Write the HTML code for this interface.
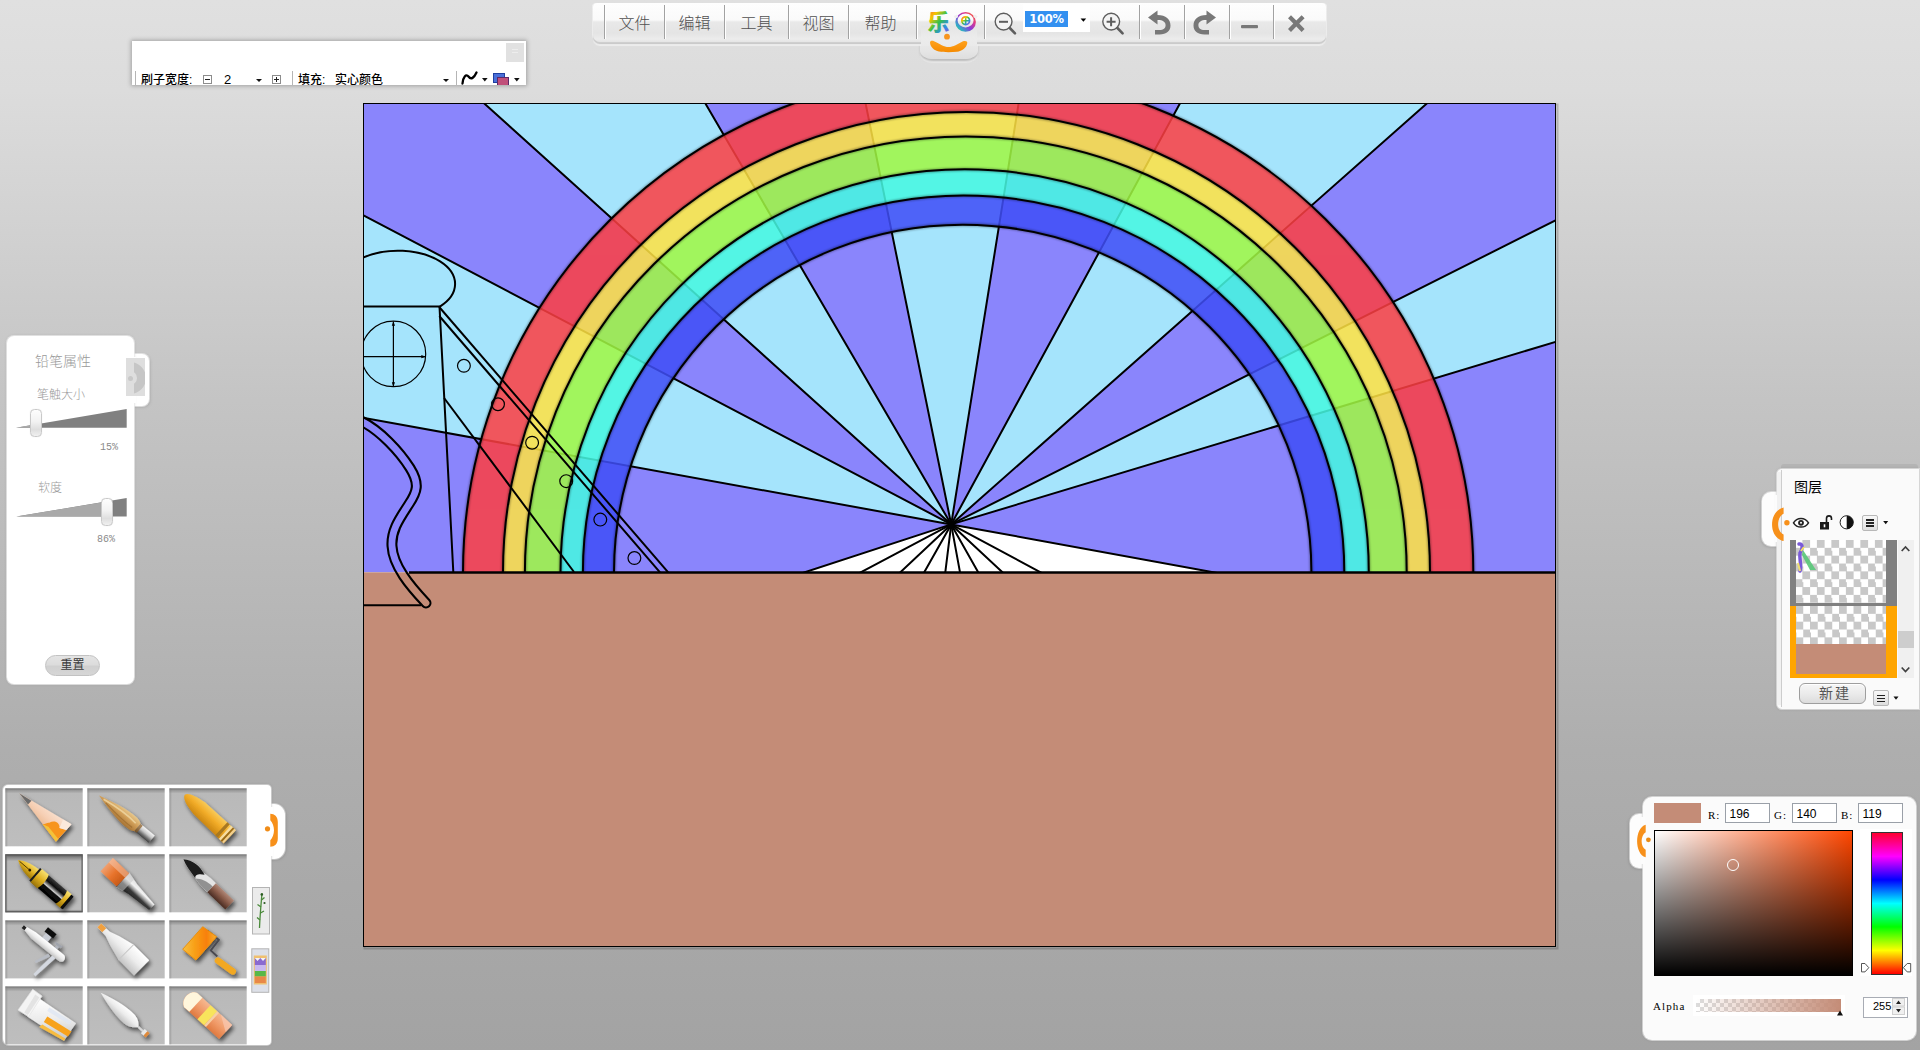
<!DOCTYPE html>
<html lang="zh-CN">
<head>
<meta charset="utf-8">
<title>Paint</title>
<style>
html,body{margin:0;padding:0;}
body{width:1920px;height:1050px;overflow:hidden;position:relative;
 background:linear-gradient(to bottom,#e0e0e0 0px,#dcdcdc 90px,#c4c4c4 400px,#aeaeae 750px,#a3a3a3 1050px);
 font-family:"Liberation Sans","Noto Sans CJK SC",sans-serif;font-size:12px;color:#000;}
.abs{position:absolute;}
.cjk{font-family:"Liberation Sans","Noto Sans CJK SC",sans-serif;}
</style>
</head>
<body>
<svg id="cv" width="1920" height="1050" viewBox="0 0 1920 1050" style="position:absolute;left:0;top:0">
<defs><clipPath id="cc"><rect x="363" y="103" width="1193" height="844"/></clipPath>
<clipPath id="sky"><rect x="363" y="103" width="1193" height="469.3"/></clipPath>
<filter id="bl" x="-5%" y="-5%" width="110%" height="110%"><feGaussianBlur stdDeviation="0.6"/></filter><filter id="bl2" x="-5%" y="-5%" width="110%" height="110%"><feGaussianBlur stdDeviation="1.3"/></filter>
<mask id="tube" maskUnits="userSpaceOnUse" x="350" y="400" width="100" height="230"><path id="tp" d="M360,420.5 C380,430 400,452 410,468 C420,484 417,492 409,504 C400,518 391,530 392,546 C393,566 410,586 426,603" fill="none" stroke="#fff" stroke-width="11" stroke-linecap="round"/><path d="M360,420.5 C380,430 400,452 410,468 C420,484 417,492 409,504 C400,518 391,530 392,546 C393,566 410,586 426,603" fill="none" stroke="#000" stroke-width="6.8" stroke-linecap="round"/></mask>
</defs>
<rect x="364.5" y="104.5" width="1193" height="844" fill="none" stroke="#000" stroke-opacity=".18" stroke-width="2"/>
<rect x="363" y="103" width="1193" height="844" fill="#fff"/>
<g clip-path="url(#cc)">
<g clip-path="url(#sky)">
<polygon points="951.2,524.4 -811.9,204.6 -811.9,-402.9" fill="#a5e4fc"/>
<polygon points="951.2,524.4 -811.9,-402.9 -449.5,-738.3" fill="#8a85fc"/>
<polygon points="951.2,524.4 -449.5,-738.3 213.8,-738.3" fill="#a5e4fc"/>
<polygon points="951.2,524.4 213.8,-738.3 694.4,-738.3" fill="#8a85fc"/>
<polygon points="951.2,524.4 694.4,-738.3 1153.4,-738.3" fill="#a5e4fc"/>
<polygon points="951.2,524.4 1153.4,-738.3 1637.3,-738.3" fill="#8a85fc"/>
<polygon points="951.2,524.4 1637.3,-738.3 2378,-738.3" fill="#a5e4fc"/>
<polygon points="951.2,524.4 2378,-738.3 2764.1,-387.9" fill="#8a85fc"/>
<polygon points="951.2,524.4 2764.1,-387.9 2764.1,-23.1" fill="#a5e4fc"/>
<polygon points="951.2,524.4 -811.9,204.6 -2000,2000 -3446.8,1961.4" fill="#8a85fc"/>
<polygon points="951.2,524.4 2764.1,-23.1 4000,2000 8820.2,1961.4" fill="#8a85fc"/>
<polyline points="245.96,396.48 951.2,524.4 1292.19,586.67" fill="none" stroke="#000" stroke-width="2" stroke-linejoin="round"/>
<polyline points="245.96,153.48 951.2,524.4 1067.29,586.67" fill="none" stroke="#000" stroke-width="2" stroke-linejoin="round"/>
<polyline points="390.92,19.32 951.2,524.4 1017.89,586.67" fill="none" stroke="#000" stroke-width="2" stroke-linejoin="round"/>
<polyline points="656.24,19.32 951.2,524.4 986.3,586.67" fill="none" stroke="#000" stroke-width="2" stroke-linejoin="round"/>
<polyline points="848.48,19.32 951.2,524.4 962.64,586.67" fill="none" stroke="#000" stroke-width="2" stroke-linejoin="round"/>
<polyline points="1032.08,19.32 951.2,524.4 943.53,586.67" fill="none" stroke="#000" stroke-width="2" stroke-linejoin="round"/>
<polyline points="1225.64,19.32 951.2,524.4 916.1,586.67" fill="none" stroke="#000" stroke-width="2" stroke-linejoin="round"/>
<polyline points="1521.92,19.32 951.2,524.4 885.03,586.67" fill="none" stroke="#000" stroke-width="2" stroke-linejoin="round"/>
<polyline points="1676.36,159.48 951.2,524.4 833.68,586.67" fill="none" stroke="#000" stroke-width="2" stroke-linejoin="round"/>
<polyline points="1676.36,305.4 951.2,524.4 760.62,586.67" fill="none" stroke="#000" stroke-width="2" stroke-linejoin="round"/>
<g opacity="0.86">
<path d="M463,572.3 A505.15,499.6 0 0 1 1473.3,572.3 L1430,572.3 A463.5,460.4 0 0 0 503,572.3 Z" fill="#fd3f43"/>
<path d="M503,572.3 A463.5,460.4 0 0 1 1430,572.3 L1406.7,572.3 A440.9,435.9 0 0 0 524.9,572.3 Z" fill="#ffe243"/>
<path d="M524.9,572.3 A440.9,435.9 0 0 1 1406.7,572.3 L1368.8,572.3 A404.15,403 0 0 0 560.5,572.3 Z" fill="#a1f843"/>
<path d="M560.5,572.3 A404.15,403 0 0 1 1368.8,572.3 L1344.3,572.3 A380.7,376.9 0 0 0 582.9,572.3 Z" fill="#46f8e1"/>
<path d="M582.9,572.3 A380.7,376.9 0 0 1 1344.3,572.3 L1311.4,572.3 A348.7,347.6 0 0 0 614,572.3 Z" fill="#404ff7"/>
</g>
<g filter="url(#bl2)" fill="none" stroke="#000" stroke-width="3.2" opacity="0.38">
<ellipse cx="968.15" cy="572.3" rx="505.15" ry="499.6"/>
<ellipse cx="966.5" cy="572.3" rx="463.5" ry="460.4"/>
<ellipse cx="965.8" cy="572.3" rx="440.9" ry="435.9"/>
<ellipse cx="964.65" cy="572.3" rx="404.15" ry="403"/>
<ellipse cx="963.6" cy="572.3" rx="380.7" ry="376.9"/>
<ellipse cx="962.7" cy="572.3" rx="348.7" ry="347.6"/>
</g>
<g filter="url(#bl)" fill="none" stroke="#000" stroke-width="2.0" opacity="1">
<ellipse cx="968.15" cy="572.3" rx="505.15" ry="499.6"/>
<ellipse cx="966.5" cy="572.3" rx="463.5" ry="460.4"/>
<ellipse cx="965.8" cy="572.3" rx="440.9" ry="435.9"/>
<ellipse cx="964.65" cy="572.3" rx="404.15" ry="403"/>
<ellipse cx="963.6" cy="572.3" rx="380.7" ry="376.9"/>
<ellipse cx="962.7" cy="572.3" rx="348.7" ry="347.6"/>
</g>
</g>
<rect x="363" y="572.3" width="1193" height="400" fill="#c48c77"/>
<line x1="409" y1="572.4" x2="1556" y2="572.4" stroke="#000" stroke-width="2.5"/>
<g fill="none" stroke="#000" stroke-width="2">
<path d="M363,257.7 A57,33.3 0 0 1 439.86,306.6"/>
<path d="M363,306.4 H439.5 L453.3,572"/>
<path d="M439.2,307 L668.2,572.3 M439.3,316 L660,572.3"/>
<path d="M444.1,398 L574,572"/>
<path d="M363,605.2 H421"/>
</g>
<g fill="none" stroke="#000" stroke-width="1.2">
<ellipse cx="393.4" cy="353.9" rx="32.3" ry="32.8"/>
<path d="M393.4,321.5 V386.5 M363,356.7 H425.7"/>
<circle cx="463.9" cy="365.8" r="6.4"/>
<circle cx="498" cy="404.25" r="6.4"/>
<circle cx="532.1" cy="442.7" r="6.4"/>
<circle cx="566.2" cy="481.15" r="6.4"/>
<circle cx="600.3" cy="519.6" r="6.4"/>
<circle cx="634.4" cy="558.05" r="6.4"/>
</g>
<path d="M393.4,321.2 l-1.6,4.5 h3.2z M393.4,386.8 l-1.6,-4.500 h3.2z M425.8,356.7 l-4.500,-1.600 v3.200z" fill="#000"/>
<rect x="350" y="400" width="100" height="230" fill="#000" mask="url(#tube)"/>
</g>
<rect x="363.5" y="103.5" width="1192" height="843" fill="none" stroke="#000" stroke-width="1"/>
</svg><style>
#mb{left:593px;top:3px;width:733px;height:39px;border-radius:4px 4px 7px 7px;
 background:linear-gradient(to bottom,#fefefe 0,#fafafa 17px,#e9e9e9 19px,#e4e4e4 30px,#ececec 36px,#e2e2e2 40px);
 box-shadow:0 1px 0 #cfcfcf,0 2px 1px #c6c6c6,0 4px 1px rgba(240,240,240,.9),-1px 0 0 rgba(245,245,245,.8),1px 0 0 rgba(245,245,245,.8);}
#mb .dv{position:absolute;top:2px;width:1px;height:34px;background:#a2a2a2;box-shadow:1px 0 0 #fff;}
#mb .mi{position:absolute;top:9px;height:24px;line-height:24px;font-size:16px;font-weight:300;color:#505050;text-align:center;white-space:nowrap;font-family:"Liberation Sans","Noto Sans CJK SC",sans-serif;}
#logotab{left:920px;top:30px;width:57.500px;height:28.500px;border-radius:0 0 12px 12px / 0 0 9px 9px;background:linear-gradient(to bottom,#ededed,#e6e6e6 70%,#dedede);box-shadow:0 2px 2px rgba(150,150,150,.55),0 4px 1px rgba(240,240,240,.7);}
#zbox{left:1023px;top:4px;width:67px;height:28px;background:#fff;}
#zsel{left:1025px;top:11px;width:43px;height:16px;background:#3390f0;color:#fff;font-weight:bold;font-size:11.5px;line-height:17px;text-align:center;font-family:"DejaVu Sans","Liberation Sans",sans-serif;letter-spacing:-0.3px;}
</style>
<div id="logotab" class="abs"></div>
<div id="mb" class="abs">
 <div class="dv" style="left:11px"></div><div class="dv" style="left:71px"></div><div class="dv" style="left:131px"></div>
 <div class="dv" style="left:195px"></div><div class="dv" style="left:255px"></div><div class="dv" style="left:323px"></div>
 <div class="dv" style="left:391px"></div><div class="dv" style="left:546px"></div><div class="dv" style="left:591px"></div>
 <div class="dv" style="left:636px"></div><div class="dv" style="left:680px"></div>
 <div class="mi" style="left:12px;width:59px">文件</div>
 <div class="mi" style="left:72px;width:59px">编辑</div>
 <div class="mi" style="left:132px;width:63px">工具</div>
 <div class="mi" style="left:196px;width:59px">视图</div>
 <div class="mi" style="left:256px;width:63px">帮助</div>
</div>
<div id="logocover" class="abs" style="left:921px;top:26px;width:56px;height:20px;background:linear-gradient(to bottom,#e5e5e5,#ececec 60%,#eaeaea)"></div>
<div id="zbox" class="abs"></div>
<div id="zsel" class="abs">100%</div>
<svg class="abs" style="left:900px;top:0" width="430" height="64" viewBox="900 0 430 64">
 <defs>
  <linearGradient id="rb1" x1="0" y1="0" x2="1" y2="1"><stop offset="0" stop-color="#ff5a3c"/><stop offset=".25" stop-color="#f5c400"/><stop offset=".5" stop-color="#35c04a"/><stop offset=".75" stop-color="#2e8de6"/><stop offset="1" stop-color="#b23bd0"/></linearGradient>
  <linearGradient id="rb2" x1="1" y1="0" x2="0" y2="1"><stop offset="0" stop-color="#ff7a1c"/><stop offset=".3" stop-color="#e03a8a"/><stop offset=".55" stop-color="#8a3bd8"/><stop offset=".8" stop-color="#2eb0c8"/><stop offset="1" stop-color="#5ac83a"/></linearGradient>
  <linearGradient id="og" x1="0" y1="0" x2="0" y2="1"><stop offset="0" stop-color="#ffa21e"/><stop offset="1" stop-color="#f58a00"/></linearGradient>
 </defs>
 <!-- logo eyes (text glyphs) -->
 <text x="938.6" y="30" font-family="'Liberation Sans','Noto Sans CJK SC',sans-serif" font-weight="900" font-size="22" text-anchor="middle" fill="url(#rb1)">乐</text>
 <path fill-rule="evenodd" d="M955.300,21.900 a10.300,9.900 0 1 0 20.600,0 a10.300,9.900 0 1 0 -20.600,0 Z M957.600,20.400 a8,7 0 1 0 16,0 a8,7 0 1 0 -16,0 Z" fill="url(#rb2)"/>
 <circle cx="965.700" cy="20.700" r="3.900" fill="none" stroke="url(#rb1)" stroke-width="1.700"/>
 <path d="M965.700,17 v7.400 M962,20.700 h7.400" stroke="url(#rb1)" stroke-width="1.500" fill="none"/>
 <rect x="954" y="15" width="3.500" height="3" fill="#efefef" transform="rotate(-30 956 16)"/>
 <rect x="974" y="15" width="3.500" height="3" fill="#efefef" transform="rotate(30 975.500 16)"/>
 <circle cx="947" cy="36.700" r="2.900" fill="#f7941d"/>
 <path d="M930,42.500 C930,40.800 932,40.500 934,41.200 C940,44 944,47 948.500,47 C953,47 958,44 963,41.200 C965.500,40.500 967.600,41 967.300,43 C966.500,48 962,51.300 957,51.700 C951,52.300 944,52.300 939,51.500 C934,50.500 930.300,47 930,42.500 Z" fill="url(#og)"/>
 <!-- zoom out -->
 <g fill="none" stroke="#5e5e5e">
  <circle cx="1003.6" cy="21.6" r="8.4" stroke-width="1.4" fill="#f4f4f4"/>
  <path d="M999,21.8 H1008" stroke-width="2"/>
  <path d="M1009.8,28 L1015,33.4" stroke-width="2.6" stroke-linecap="round"/>
  <circle cx="1111.2" cy="21.6" r="8.4" stroke-width="1.4" fill="#f4f4f4"/>
  <path d="M1106.6,21.8 H1115.6 M1111.1,17.3 V26.3" stroke-width="2"/>
  <path d="M1117.4,28 L1122.6,33.4" stroke-width="2.6" stroke-linecap="round"/>
 </g>
 <path d="M1080.6,18.4 h5.6 l-2.8,3.4z" fill="#000"/>
 <!-- undo -->
 <g fill="#787878">
  <path d="M1148,17.5 L1157.5,10.5 L1157.5,15 C1166,15 1170.5,19.5 1170.5,25.5 C1170.5,31 1166.5,34.5 1159.5,34.5 L1155,34.5 L1155,30 L1159.5,30 C1163.5,30 1165.6,28.2 1165.6,25.2 C1165.6,22 1163,20 1157.5,20 L1157.5,24.5 Z"/>
  <path d="M1216,17.5 L1206.5,10.5 L1206.5,15 C1198,15 1193.5,19.5 1193.5,25.5 C1193.5,31 1197.5,34.5 1204.500,34.5 L1209,34.5 L1209,30 L1204.5,30 C1200.5,30 1198.4,28.2 1198.4,25.2 C1198.4,22 1201,20 1206.5,20 L1206.5,24.5 Z"/>
  <rect x="1241" y="25" width="17" height="3.2" rx="1"/>
  <path d="M1288,14.5 L1291,11.500 L1296.300,16.800 L1301.600,11.500 L1304.600,14.500 L1299.300,19.800 L1304.600,25.100 L1301.600,28.100 L1296.300,22.800 L1291,28.100 L1288,25.100 L1293.300,19.800 Z" transform="translate(0,3.8)"/>
 </g>
</svg>
<style>
#tb{left:132px;top:41px;width:394px;height:44px;background:#fff;box-shadow:0 0 4px 1px rgba(90,90,90,.45);overflow:hidden;}
#tb .t{position:absolute;top:29.5px;height:18px;line-height:18px;font-size:12px;color:#000;white-space:nowrap;font-weight:500;}
#tb .bx{position:absolute;top:34px;width:7px;height:7px;border:1px solid #8c8c8c;background:#fff;}
#tb .ar{position:absolute;top:38px;width:0;height:0;border-left:3px solid transparent;border-right:3px solid transparent;border-top:3.5px solid #111;}
#tb .dv{position:absolute;top:30px;width:1px;height:16px;background:#b5b5b5;}
</style>
<div id="tb" class="abs">
 <div class="abs" style="left:374px;top:2px;width:18px;height:19px;background:#e1e1e1"></div>
 <div class="abs" style="left:380px;top:8px;width:6px;height:1px;background:#ededed;box-shadow:0 3px 0 #ededed"></div>
 <div class="dv" style="left:3px"></div>
 <div class="t" style="left:9px">刷子宽度:</div>
 <div class="bx" style="left:71px"><div class="abs" style="left:1px;top:3px;width:5px;height:1px;background:#222"></div></div>
 <div class="t" style="left:92px;font-size:13px">2</div>
 <div class="ar" style="left:123.500px"></div>
 <div class="bx" style="left:140px"><div class="abs" style="left:1px;top:3px;width:5px;height:1px;background:#222"></div><div class="abs" style="left:3px;top:1px;width:1px;height:5px;background:#222"></div></div>
 <div class="dv" style="left:160px"></div>
 <div class="t" style="left:166px">填充:</div>
 <div class="t" style="left:203px">实心颜色</div>
 <div class="ar" style="left:310.500px"></div>
 <div class="dv" style="left:324px"></div>
 <svg class="abs" style="left:328px;top:28px" width="66" height="18" viewBox="0 0 66 18">
  <path d="M2.500,14.500 C3,8 6,4.500 8.500,7.500 C11,11 14,9 16.500,3.500" fill="none" stroke="#000" stroke-width="2.300" stroke-linecap="round"/>
  <path d="M22,9 h5.600 l-2.800,3.400z" fill="#111"/>
  <rect x="33.500" y="4.500" width="11" height="9" fill="#4a6fd8" stroke="#1f3fa0" stroke-width="1"/>
  <rect x="37.500" y="8.500" width="11" height="9.500" fill="#c0507a" stroke="#5a2a6a" stroke-width="1"/>
  <path d="M54,9 h5.600 l-2.800,3.400z" fill="#111"/>
 </svg>
</div>
<style>
#pp{left:7px;top:336px;width:127px;height:348px;background:#fff;border-radius:7px;box-shadow:0 0 0 1px rgba(235,235,235,.75),0 0 3px rgba(120,120,120,.35);}
#pptab{left:120px;top:354px;width:29px;height:52px;background:#fff;border-radius:0 7px 7px 0;box-shadow:0 0 0 1px rgba(235,235,235,.75),1px 1px 3px rgba(110,110,110,.4);}
.lbl{position:absolute;color:#9a9a9a;white-space:nowrap;font-weight:300;}
.pct{position:absolute;color:#8a8a8a;font-family:"Liberation Mono","DejaVu Sans Mono",monospace;font-size:10px;line-height:12px;}
.thumb{position:absolute;width:10px;height:26px;border:1px solid #c9c9c9;border-radius:4.5px;background:linear-gradient(to bottom,#fdfdfd,#f2f2f2 45%,#dedede 75%,#f0f0f0);box-shadow:0 0 1px rgba(0,0,0,.15);}
#rst{left:45px;top:654.500px;width:53px;height:19.500px;border:1px solid #c2c2c2;border-radius:11px;background:linear-gradient(to bottom,#e4e4e4,#dcdcdc 45%,#d0d0d0 55%,#d6d6d6);font-size:12px;line-height:19.500px;text-align:center;color:#3a3a3a;font-weight:400;}
</style>
<div id="pptab" class="abs"></div>
<div id="pp" class="abs"></div>
<div class="abs" style="left:131px;top:357px;width:5px;height:46px;background:#fff"></div>
<div class="abs" style="left:126px;top:358px;width:19px;height:38px;background:#dedede;overflow:hidden">
 <div class="abs" style="left:-12px;top:4px;width:14px;height:14px;border-radius:50%;border:9px solid #c6c6c6;"></div>
 <div class="abs" style="left:0;top:0;width:7.500px;height:38px;background:#dedede"></div>
 <div class="abs" style="left:1.500px;top:17.500px;width:5.500px;height:5.500px;border-radius:50%;background:#c8c8c8"></div>
</div>
<div class="lbl" style="left:35px;top:350px;font-size:14px;line-height:22px">铅笔属性</div>
<div class="lbl" style="left:37px;top:386px;font-size:12px;line-height:18px">笔触大小</div>
<svg class="abs" style="left:10px;top:400px" width="125" height="130" viewBox="10 400 125 130">
 <polygon points="16,427.700 126.700,409 126.700,427.700" fill="#808080"/>
 <polygon points="16,427.700 30,425.300 30,427.700" fill="#a9a9a9"/>
 <polygon points="16.300,516.600 126.700,498.100 126.700,516.600" fill="#808080"/>
 <polygon points="16.300,516.600 107,501.400 107,516.600" fill="#a9a9a9"/>
</svg>
<div class="thumb" style="left:30px;top:409px"></div>
<div class="pct" style="left:100px;top:442px">15%</div>
<div class="lbl" style="left:38px;top:479px;font-size:12px;line-height:18px">软度</div>
<div class="thumb" style="left:101px;top:498px"></div>
<div class="pct" style="left:97px;top:534px">86%</div>
<div id="rst" class="abs">重置</div>
<style>
#tp{left:3px;top:785px;width:268px;height:260px;background:#fff;border-radius:5px 4px 4px 6px;box-shadow:0 0 0 1px rgba(225,225,225,.6),0 0 3px rgba(100,100,100,.35);}
#tptab{left:255px;top:803.500px;width:30px;height:55.500px;background:#fff;border-radius:0 11px 11px 0;box-shadow:0 0 0 1px rgba(225,225,225,.6),1px 1px 3px rgba(100,100,100,.4);}
</style>
<div id="tptab" class="abs"></div>
<div id="tp" class="abs"></div>
<div class="abs" style="left:268px;top:807px;width:5px;height:49px;background:#fff"></div>
<svg class="abs" style="left:0;top:780px" width="300" height="270" viewBox="0 780 300 270">
<defs>
<filter id="ds" x="-30%" y="-30%" width="170%" height="170%"><feGaussianBlur in="SourceAlpha" stdDeviation="2"/><feOffset dx="2" dy="3"/><feComponentTransfer><feFuncA type="linear" slope="0.62"/></feComponentTransfer><feMerge><feMergeNode/><feMergeNode in="SourceGraphic"/></feMerge></filter>
<filter id="sf" x="-10%" y="-10%" width="120%" height="120%"><feGaussianBlur stdDeviation="0.45"/></filter>
<linearGradient id="cellsh" x1="0" y1="0" x2="0" y2="1"><stop offset="0" stop-color="#707070"/><stop offset="0.035" stop-color="#989898"/><stop offset="0.09" stop-color="#b9b9b9"/><stop offset="1" stop-color="#bebebe"/></linearGradient>
<linearGradient id="cellsel" x1="0" y1="0" x2="0" y2="1"><stop offset="0" stop-color="#4e4e4e"/><stop offset="0.05" stop-color="#868686"/><stop offset="0.12" stop-color="#b6b6b6"/><stop offset="0.95" stop-color="#bcbcbc"/><stop offset="1" stop-color="#6a6a6a"/></linearGradient>
<linearGradient id="gWood" x1="0" y1="0" x2="0" y2="1"><stop offset="0" stop-color="#fbe3d2"/><stop offset=".5" stop-color="#f6cfb4"/><stop offset="1" stop-color="#e8b48a"/></linearGradient>
<linearGradient id="gBris" x1="0" y1="0" x2="0" y2="1"><stop offset="0" stop-color="#e8c88c"/><stop offset=".45" stop-color="#d2a05a"/><stop offset="1" stop-color="#a87434"/></linearGradient>
<linearGradient id="gSil" x1="0" y1="0" x2="0" y2="1"><stop offset="0" stop-color="#f4f4f4"/><stop offset=".4" stop-color="#c8c8c8"/><stop offset=".75" stop-color="#707070"/><stop offset="1" stop-color="#404040"/></linearGradient>
<linearGradient id="gSil2" x1="0" y1="0" x2="0" y2="1"><stop offset="0" stop-color="#dcdcdc"/><stop offset=".32" stop-color="#f2f2f2"/><stop offset=".48" stop-color="#9a9a9a"/><stop offset=".62" stop-color="#3a3a3a"/><stop offset="1" stop-color="#1a1a1a"/></linearGradient>
<linearGradient id="gAmb" x1="0" y1="0" x2="0" y2="1"><stop offset="0" stop-color="#f9cc5c"/><stop offset=".45" stop-color="#f2ac28"/><stop offset="1" stop-color="#c98410"/></linearGradient>
<linearGradient id="gGold" x1="0" y1="0" x2="0" y2="1"><stop offset="0" stop-color="#f8e070"/><stop offset=".5" stop-color="#e0b020"/><stop offset="1" stop-color="#9a7408"/></linearGradient>
<linearGradient id="gBlk" x1="0" y1="0" x2="0" y2="1"><stop offset="0" stop-color="#3a3a3a"/><stop offset=".3" stop-color="#0c0c0c"/><stop offset=".55" stop-color="#d0d0d0"/><stop offset=".62" stop-color="#111"/><stop offset="1" stop-color="#000"/></linearGradient>
<linearGradient id="gOrB" x1="0" y1="0" x2="1" y2="0"><stop offset="0" stop-color="#f0a070"/><stop offset=".5" stop-color="#e8742c"/><stop offset="1" stop-color="#c85a18"/></linearGradient>
<linearGradient id="gBrn" x1="0" y1="0" x2="0" y2="1"><stop offset="0" stop-color="#b08878"/><stop offset=".45" stop-color="#8a5c4a"/><stop offset="1" stop-color="#4a2c22"/></linearGradient>
<linearGradient id="gHair" x1="0" y1="0" x2="1" y2="0"><stop offset="0" stop-color="#111"/><stop offset=".4" stop-color="#333"/><stop offset=".6" stop-color="#ddd"/><stop offset="1" stop-color="#b8b8b8"/></linearGradient>
<linearGradient id="gWht" x1="0" y1="0" x2="0" y2="1"><stop offset="0" stop-color="#ffffff"/><stop offset=".5" stop-color="#ececec"/><stop offset="1" stop-color="#c4c4c4"/></linearGradient>
<linearGradient id="gRol" x1="0" y1="0" x2="1" y2="0"><stop offset="0" stop-color="#f8c040"/><stop offset=".35" stop-color="#f8a018"/><stop offset=".7" stop-color="#f88008"/><stop offset="1" stop-color="#f8b030"/></linearGradient>
<linearGradient id="gEra" x1="0" y1="0" x2="0" y2="1"><stop offset="0" stop-color="#f6b890"/><stop offset=".5" stop-color="#f09a68"/><stop offset="1" stop-color="#e07a40"/></linearGradient>
</defs>
<rect x="5.3" y="788.3" width="77.4" height="58" fill="url(#cellsh)"/>
<rect x="5.3" y="788.3" width="2" height="58" fill="#808080" opacity=".35"/>
<rect x="87.3" y="788.3" width="77.4" height="58" fill="url(#cellsh)"/>
<rect x="87.3" y="788.3" width="2" height="58" fill="#808080" opacity=".35"/>
<rect x="169.3" y="788.3" width="77.4" height="58" fill="url(#cellsh)"/>
<rect x="169.3" y="788.3" width="2" height="58" fill="#808080" opacity=".35"/>
<rect x="5.3" y="854.3" width="77.4" height="58" fill="url(#cellsel)"/>
<rect x="5.3" y="854.3" width="2" height="58" fill="#808080" opacity=".35"/>
<rect x="5.9" y="854.9" width="76.2" height="56.8" fill="none" stroke="#5c5c5c" stroke-width="1.2"/>
<rect x="87.3" y="854.3" width="77.4" height="58" fill="url(#cellsh)"/>
<rect x="87.3" y="854.3" width="2" height="58" fill="#808080" opacity=".35"/>
<rect x="169.3" y="854.3" width="77.4" height="58" fill="url(#cellsh)"/>
<rect x="169.3" y="854.3" width="2" height="58" fill="#808080" opacity=".35"/>
<rect x="5.3" y="920.4" width="77.4" height="58" fill="url(#cellsh)"/>
<rect x="5.3" y="920.4" width="2" height="58" fill="#808080" opacity=".35"/>
<rect x="87.3" y="920.4" width="77.4" height="58" fill="url(#cellsh)"/>
<rect x="87.3" y="920.4" width="2" height="58" fill="#808080" opacity=".35"/>
<rect x="169.3" y="920.4" width="77.4" height="58" fill="url(#cellsh)"/>
<rect x="169.3" y="920.4" width="2" height="58" fill="#808080" opacity=".35"/>
<rect x="5.3" y="986.4" width="77.4" height="58" fill="url(#cellsh)"/>
<rect x="5.3" y="986.4" width="2" height="58" fill="#808080" opacity=".35"/>
<rect x="87.3" y="986.4" width="77.4" height="58" fill="url(#cellsh)"/>
<rect x="87.3" y="986.4" width="2" height="58" fill="#808080" opacity=".35"/>
<rect x="169.3" y="986.4" width="77.4" height="58" fill="url(#cellsh)"/>
<rect x="169.3" y="986.4" width="2" height="58" fill="#808080" opacity=".35"/>
<g filter="url(#ds)"><g transform="translate(19.3,793.3) rotate(41.8)"><polygon points="0,0 59.5,-11.6 59.5,11.6" fill="url(#gWood)"/><polygon points="0,0 14,-2.6 14,2.6" fill="#6a6a6a"/><path d="M42,2 C44,-4 50,-5 53,-1 L59.5,-4 L59.5,11.600 L38,7.400 C40,6 40,3 42,2Z" fill="#f7941d"/><path d="M38,7.400 L59.5,11.600 L59.5,8 L44,5.500Z" fill="#f3c23a"/><path d="M59.5,-11.600 L59.5,-4 L53,-1 L50,-9.700Z" fill="#fbe9dc"/></g></g>
<g filter="url(#ds)"><g transform="translate(99,795.4) rotate(39.7)"><path d="M0,0 C12,-3 30,-8.500 44,-7 C50,-6 53,-3 53,0 C53,3.500 50,6.500 43,7 C30,8 12,3 0,0Z" fill="url(#gBris)"/><path d="M6,0 C18,-2 32,-4 46,-2" stroke="#f0d8a4" stroke-width="1.600" fill="none" opacity=".8"/><path d="M10,1.500 C22,3 34,4.500 46,3.500" stroke="#9a6a2c" stroke-width="1.200" fill="none" opacity=".7"/><rect x="50" y="-4.600" width="18.500" height="9.200" fill="url(#gSil)"/><rect x="50" y="-4.600" width="3" height="9.200" fill="#8a5a20" opacity=".7"/></g></g>
<g filter="url(#ds)"><g transform="translate(184.7,794.7) rotate(43)"><path d="M0,0 C1,-4 8,-6.500 20,-8.200 L61.5,-8.900 L61.5,8.900 L20,8.200 C8,6.500 1,4 0,0Z" fill="url(#gAmb)"/><rect x="50" y="-8.900" width="3.200" height="17.800" fill="#a87820"/><rect x="55" y="-8.900" width="2.600" height="17.800" fill="#f6dca0"/><rect x="57.600" y="-8.900" width="2" height="17.800" fill="#9a6c1c"/><rect x="59.600" y="-8.900" width="1.900" height="17.800" fill="#f2d090"/></g></g>
<g filter="url(#ds)"><g transform="translate(18,860) rotate(40.6)"><rect x="24" y="-8.300" width="41.500" height="16.600" fill="url(#gBlk)"/><path d="M0,0 C6,-4 14,-6.500 24,-6.500 L24,6.500 C14,6.500 6,4 0,0Z" fill="url(#gGold)"/><path d="M2,0 H15" stroke="#3a2a00" stroke-width=".8"/><circle cx="15.500" cy="0" r="1.400" fill="#2a1c00"/><rect x="22" y="-8.300" width="2.200" height="16.600" fill="#1a1a1a"/><path d="M24,-8.800 h9 c2,5 2,12.600 0,17.600 h-9z" fill="url(#gGold)"/><path d="M57,-8.800 h6 c2.500,5 2.500,12.600 0,17.600 h-6 c2,-5 2,-12.600 0,-17.600z" fill="url(#gGold)"/><rect x="63" y="-8.300" width="3" height="16.600" fill="#0a0a0a"/></g></g>
<g filter="url(#ds)"><g transform="translate(106.7,864.6) rotate(43.4)"><path d="M22,-9.500 L36,-6.500 L62,-3.800 L62,3.800 L36,6.500 L22,9.500Z" fill="url(#gSil2)"/><path d="M0,-9.100 L22.400,-9.100 L22.400,9.100 L0,9.100Z" fill="url(#gOrB)"/><path d="M0,-9.100 L22.400,-9.100 L22.400,-3 L0,-3Z" fill="#f6c4a8" opacity=".55"/><path d="M22.400,-9.500 L30,-8 L30,8 L22.400,9.500Z" fill="#c8c8c8" opacity=".55"/></g></g>
<g filter="url(#ds)"><g transform="translate(182.7,860) rotate(43.8)"><path d="M0,-1 C8,-7 16,-8 24,-5 C30,-6.500 38,-6.500 42,-6 L42,6 C36,6.500 28,6 22,4.500 C14,3 6,2 0,-1Z" fill="#e4e4e4"/><path d="M0,-1 C8,-7 16,-8 26,-4.500 C22,-2 18,2 22,4.500 C14,3 6,2 0,-1Z" fill="#1c1c1c"/><path d="M22,4.500 C26,1 32,-2 40,-1.500 L40,6 C34,6.500 28,6 22,4.500Z" fill="#7c7c7c" opacity=".8"/><rect x="40" y="-6.200" width="25" height="12.400" fill="url(#gBrn)"/></g></g>
<g filter="url(#ds)"><g transform="translate(22.7,926.7) rotate(39)"><path d="M45.500,2 L41,30.600 L38,30 L41.500,2Z" fill="#d4d8e0"/><path d="M40,6 L33,20 L31,19 L37,5Z" fill="#b8bcc4"/><rect x="22" y="-12" width="7" height="9" fill="#c8ccd4"/><rect x="20" y="-15.500" width="11" height="5.500" fill="#111"/><rect x="38" y="-8" width="3" height="6" fill="#b0b4bc"/><rect x="36" y="-9.500" width="7" height="2.500" fill="#a0a4ac"/><path d="M0,-1.500 L4,-2.500 L14,-4 L50,-4 C54,-3 55,3 50,4 L14,4 L4,1.800 L0,1Z" fill="url(#gWht)"/><rect x="0" y="-1.800" width="3.500" height="3.400" fill="#222"/></g></g>
<g filter="url(#ds)"><g transform="translate(99.3,925.3) rotate(45.2)"><path d="M0,-2.600 L12,-3 L22,-6.500 L38,-10.700 L60,-10.700 L60,10.700 L38,10.700 L22,6.500 L12,3 L0,2.600Z" fill="url(#gWht)"/><path d="M0,-2.600 L7,-2.900 L7,2.900 L0,2.600Z" fill="#f0a040"/><path d="M38,-10.700 L38,10.700" stroke="#c8c8c8" stroke-width="1"/></g></g>
<g filter="url(#ds)"><g transform="translate(169.3,920.4)"><path d="M38,10 L49.500,19.500 L41.500,30 L48,36" fill="none" stroke="#4a4a50" stroke-width="2"/><path d="M48.700,40.300 L63.400,50.900" stroke="#f2a820" stroke-width="6.500" stroke-linecap="round"/><path d="M33.400,6.300 L47.400,16.300 L26.700,39.600 L13.400,28.900Z" fill="url(#gRol)" stroke="#e89010" stroke-width="1" stroke-linejoin="round"/></g></g>
<g filter="url(#ds)"><g transform="translate(5.3,986.4)"><path d="M34,12 L70.700,36.900 L58.700,54.300 L22,30Z" fill="url(#gWht)"/><path d="M42,30 L66,45 L62.500,50 L38.500,35.500Z" fill="#f7a21c"/><path d="M37,38 L60,52.200 L58.700,54.300 L34,40.500Z" fill="#f8bc40"/><path d="M44,21 L66,35 L64,38 L42,24.500Z" fill="#dfe6f2" opacity=".8"/><path d="M27.400,2.900 L36.700,9.600 L23.400,30.300 L12.700,23.600Z" fill="#f4f4f4" stroke="#e0e0e0" stroke-width=".6"/><path d="M30,8 L34,11 L22.500,28.500 L19,26Z" fill="#dcdcdc" opacity=".7"/></g></g>
<g filter="url(#ds)"><g transform="translate(100.7,992.7) rotate(42.3)"><path d="M0,0 C10,-3 28,-8 40,-6.500 C47,-5.500 49,-2 51.400,0 C49,2 46,6.500 38,7 C26,7.500 10,3 0,0Z" fill="url(#gWht)"/><path d="M51,0 L58,0" stroke="#d8d8d8" stroke-width="2"/><rect x="57" y="-2.800" width="4" height="5.600" fill="#e8e8e8"/><rect x="60.500" y="-2.800" width="3" height="5.600" fill="#e08a3a"/></g></g>
<g filter="url(#ds)"><g transform="translate(186.3,996) rotate(42.5)"><path d="M6,-9.600 L53.300,-9.600 L53.300,9.600 L6,9.600 C-2,7 -2,-7 6,-9.600Z" fill="url(#gEra)"/><path d="M6,-9.600 L13,-9.600 L13,9.600 L6,9.600 C-2,7 -2,-7 6,-9.600Z" fill="#fff6dc"/><rect x="24" y="-9.600" width="9" height="19.200" fill="#f8e45c"/><rect x="33" y="-9.600" width="2.500" height="19.200" fill="#f6cfa4"/><path d="M38,-9.600 L53.300,-9.600 L53.300,0Z" fill="#f8c8b0" opacity=".7"/></g></g>
<path d="M270.300,813.800 C274.500,813.800 277.800,816.500 277.800,822 L277.800,838.500 C277.800,844 274.500,846.700 270.300,846.700 L270.300,840.300 C272.600,838 274,834 274,830.200 C274,826.500 272.600,822.500 270.300,820.200Z" fill="#f7901a"/><circle cx="267.500" cy="828.800" r="2.600" fill="#f08c18"/>
<rect x="252.500" y="887.500" width="17" height="46.500" fill="#ebebeb" stroke="#b4b4b4" stroke-width="1"/>
<g fill="none" stroke="#4a8a3a" stroke-width="1.300"><path d="M262,893 C261,905 260,915 259.500,928"/><path d="M261.500,900 l3,-2.500 M261,907 l-3.500,-2.500 M260.500,913 l3.500,-2 M260,920 l-3,-2.500"/></g><circle cx="261.800" cy="894.500" r="1.300" fill="#2a5a22"/><circle cx="264.500" cy="903" r="1.100" fill="#2a5a22"/>
<rect x="251.800" y="948.800" width="17" height="43.500" fill="#dde0e8" stroke="#b4b4b4" stroke-width="1"/>
<rect x="253.800" y="955.500" width="13" height="29" fill="#f0c070"/><rect x="254.800" y="958" width="11" height="7" fill="#8a6ad0"/><rect x="254.800" y="965" width="11" height="6" fill="#c8b8f0"/><rect x="254.800" y="971" width="11" height="5.500" fill="#58b848"/><rect x="254.800" y="976.500" width="11" height="6.500" fill="#e88848"/><path d="M254.800,958 l2.700,3 2.800,-3 2.700,3 2.800,-3z" fill="#f4f4f4"/>
</svg><style>
#ly{left:1777px;top:469px;width:141.500px;height:239.500px;background:#fafafa;border-radius:5px 0 0 5px;box-shadow:0 0 0 1px rgba(230,230,230,.7),0 0 3px rgba(100,100,100,.4);}
#lytab{left:1762px;top:491.500px;width:30px;height:54px;background:#fdfdfd;border-radius:9px 0 0 9px;box-shadow:0 0 0 1px rgba(230,230,230,.7),-1px 1px 3px rgba(100,100,100,.4);}
.chk{background-color:#fff;background-image:conic-gradient(#c8c8c8 25%,#fff 0 50%,#c8c8c8 0 75%,#fff 0);background-size:14.500px 15.700px;}
#newb{left:1798.500px;top:682.500px;width:65px;height:19px;border:1px solid #9e9e9e;border-radius:6px;background:linear-gradient(to bottom,#f6f6f6,#ebebeb 50%,#dcdcdc);font-size:14px;line-height:19px;text-align:center;color:#555;letter-spacing:2px;text-indent:6px;font-weight:400;box-shadow:0 1px 0 #fff inset;}
.mbtn{position:absolute;width:14px;height:14px;border:1px solid #b8b8b8;border-radius:2px;background:linear-gradient(to bottom,#f8f8f8,#dedede);}
.mbtn i{position:absolute;left:3px;width:8px;height:1.500px;background:#222;}
</style>
<div class="abs" style="left:1781px;top:464px;width:137px;height:6px;background:#b4b4b4;border-radius:3px 3px 0 0"></div>
<div id="lytab" class="abs"></div>
<div id="ly" class="abs"></div>
<div class="abs" style="left:1775px;top:495px;width:4px;height:47px;background:#fcfcfc"></div>
<div class="abs" style="left:1777px;top:472px;width:4px;height:233px;background:#f1f1f1"></div><div class="abs" style="left:1781px;top:470px;width:1px;height:237px;background:#cdcdcd"></div>
<div class="abs" style="left:1794px;top:476px;font-size:14px;line-height:22px;color:#000">图层</div>
<svg class="abs" style="left:1760px;top:490px" width="160" height="60" viewBox="1760 490 160 60">
 <path d="M1783.600,507.600 C1768.200,511 1768.200,538 1783.600,541 L1783.600,534.500 C1776.300,531 1776.300,517.500 1783.600,513.800Z" fill="#f7901a"/>
 <circle cx="1786.900" cy="522.800" r="2.700" fill="#f7901a"/>
 <path d="M1793.500,522.800 C1797,517 1805,517 1808.500,522.800 C1805,528.500 1797,528.500 1793.500,522.800Z" fill="#fff" stroke="#222" stroke-width="1.500"/>
 <circle cx="1801" cy="522.800" r="2.900" fill="#222"/><circle cx="1801" cy="522.800" r="1" fill="#fff"/>
 <rect x="1820" y="522" width="9" height="7.500" fill="#1a1a1a"/><path d="M1826.500,522 v-3.500 c0,-3.500 5,-3.500 5,0 v1.500" fill="none" stroke="#1a1a1a" stroke-width="1.600"/><rect x="1823.700" y="524.300" width="1.600" height="3" fill="#fff"/>
 <circle cx="1846.700" cy="522.300" r="6.600" fill="#fff" stroke="#222" stroke-width="1"/><path d="M1846.700,515.700 a6.600,6.600 0 0 1 0,13.200z" fill="#111"/>
 <path d="M1883.200,521 h5 l-2.500,3.200z" fill="#111"/>
</svg>
<div class="mbtn" style="left:1861.500px;top:514.500px"><i style="top:3.500px"></i><i style="top:6.500px"></i><i style="top:9.500px"></i></div>
<!-- layer list -->
<div class="abs" style="left:1790px;top:540px;width:107px;height:66px;background:#808080"></div>
<div class="abs chk" style="left:1796px;top:540px;width:90px;height:63px;background-position:-0.400px 0"></div>
<svg class="abs" style="left:1796px;top:541px" width="30" height="36" viewBox="0 0 30 36">
 <path d="M3,3 C7,2 7,8 4,12 C3,18 6,24 4,30" stroke="#7a5ad8" stroke-width="3.500" fill="none" stroke-linecap="round"/>
 <path d="M5,10 L8,6" stroke="#f2e060" stroke-width="2"/>
 <path d="M7,9 L20,29 L14,29 L6,14" fill="#58c878" opacity=".9"/>
 <path d="M2,22 L4,30" stroke="#f0e070" stroke-width="2"/>
</svg>
<div class="abs" style="left:1790px;top:606px;width:107px;height:72px;background:#ffa500"></div>
<div class="abs chk" style="left:1796px;top:606px;width:90px;height:38px;background-position:7.250px 0"></div>
<div class="abs" style="left:1796px;top:644px;width:90px;height:30px;background:#c48c77"></div>
<!-- scrollbar -->
<div class="abs" style="left:1897.500px;top:540px;width:16px;height:137.500px;background:#f0f0f0"></div>
<div class="abs" style="left:1897.500px;top:631px;width:16px;height:16.500px;background:#cdcdcd"></div>
<svg class="abs" style="left:1897px;top:540px" width="18" height="138" viewBox="0 0 18 138">
 <path d="M4.700,11 L8.500,7 L12.300,11" fill="none" stroke="#404040" stroke-width="1.700"/>
 <path d="M4.700,127.500 L8.500,131.500 L12.300,127.500" fill="none" stroke="#404040" stroke-width="1.700"/>
</svg>
<div id="newb" class="abs">新建</div>
<div class="mbtn" style="left:1872.500px;top:690px"><i style="top:3.500px"></i><i style="top:6.500px"></i><i style="top:9.500px"></i></div>
<svg class="abs" style="left:1890px;top:690px" width="14" height="14" viewBox="0 0 14 14"><path d="M3.500,6.500 h5 l-2.500,3.200z" fill="#111"/></svg>
<style>
#cp{left:1643px;top:797px;width:273px;height:243px;background:#fbfbfb;border-radius:9px;box-shadow:0 0 0 1px rgba(230,230,230,.7),0 0 3px rgba(100,100,100,.4);}
#cptab{left:1630px;top:813.500px;width:30px;height:54px;background:#fdfdfd;border-radius:9px 0 0 9px;box-shadow:0 0 0 1px rgba(230,230,230,.7),-1px 1px 3px rgba(100,100,100,.4);}
.cl{position:absolute;top:806px;font-family:"Liberation Serif","DejaVu Serif",serif;font-size:11px;line-height:18px;color:#000;letter-spacing:1px;}
.cb{position:absolute;top:803px;width:43px;height:18px;border:1px solid #9aa0a8;background:#fff;font-size:12px;line-height:21px;color:#000;text-indent:3.500px;}
</style>
<div id="cptab" class="abs"></div>
<div id="cp" class="abs"></div>
<div class="abs" style="left:1641px;top:817px;width:4px;height:47px;background:#fcfcfc"></div>
<svg class="abs" style="left:1628px;top:810px" width="30" height="60" viewBox="1628 810 30 60">
 <path d="M1645.700,824.700 C1634.300,828 1634.300,854 1645.700,857.300 L1645.700,849.800 C1640.300,846.500 1640.300,835.500 1645.700,832.200Z" fill="#f7901a"/>
 <circle cx="1648.400" cy="839.800" r="2.400" fill="#e98a14"/>
</svg>
<div class="abs" style="left:1654px;top:803px;width:47px;height:19.500px;background:#c48c77"></div>
<div class="cl" style="left:1708px">R:</div><div class="cb" style="left:1725px">196</div>
<div class="cl" style="left:1774px">G:</div><div class="cb" style="left:1792px">140</div>
<div class="cl" style="left:1841px">B:</div><div class="cb" style="left:1858px">119</div>
<div class="abs" style="left:1654px;top:830px;width:197px;height:144px;border:1px solid #000;background:linear-gradient(to bottom,rgba(0,0,0,0),#000),linear-gradient(to right,#fff,#ff4600);"></div>
<div class="abs" style="left:1727px;top:859px;width:10px;height:10px;border:1px solid #fff;border-radius:50%"></div>
<div class="abs" style="left:1860px;top:829px;width:52px;height:147px;background:#fff"></div>
<div class="abs" style="left:1871px;top:832px;width:30px;height:141px;border:1px solid #333;background:linear-gradient(to bottom,#ff0030 0%,#ff00ff 16.600%,#0000ff 33.300%,#00ffff 50%,#00ff00 66.600%,#ffff00 83.300%,#ff0000 100%)"></div>
<svg class="abs" style="left:1858px;top:960px" width="56" height="16" viewBox="1858 960 56 16">
 <path d="M1861.500,963.500 h3.500 l3.800,4.200 l-3.800,4.200 h-3.500z" fill="#fff" stroke="#555" stroke-width="1"/>
 <path d="M1910.700,963.500 h-3.500 l-3.800,4.200 l3.800,4.200 h3.500z" fill="#fff" stroke="#555" stroke-width="1"/>
</svg>
<div class="abs" style="left:1653px;top:997px;font-family:'Liberation Serif','DejaVu Serif',serif;font-size:11px;line-height:18px;letter-spacing:1.1px">Alpha</div>
<div class="abs" style="left:1693px;top:994.500px;width:152px;height:21px;background:#fff"></div>
<div class="abs" style="left:1696px;top:999px;width:145px;height:12.500px;background-color:#fff;background-image:linear-gradient(to right,rgba(196,140,119,0),rgba(196,140,119,1)),linear-gradient(45deg,#dcdcdc 25%,transparent 25%,transparent 75%,#dcdcdc 75%),linear-gradient(45deg,#dcdcdc 25%,transparent 25%,transparent 75%,#dcdcdc 75%);background-size:100% 100%,8px 8px,8px 8px;background-position:0 0,0 0,4px 4px;"></div>
<svg class="abs" style="left:1834px;top:1008px" width="12" height="10" viewBox="0 0 12 10"><path d="M3,7.500 L6,2.500 L9,7.500Z" fill="#111"/></svg>
<div class="abs" style="left:1863px;top:996.500px;width:43px;height:19px;border:1px solid #a8acb4;background:#fff;font-size:11px;line-height:16px;"><span style="position:absolute;left:9px;top:0">255</span></div>
<svg class="abs" style="left:1892px;top:998px" width="14" height="18" viewBox="0 0 14 18"><rect x="0.500" y="0.500" width="12" height="7.500" fill="#f0f0f0" stroke="#d0d0d0"/><rect x="0.500" y="9" width="12" height="7.500" fill="#f0f0f0" stroke="#d0d0d0"/><path d="M4,6 L6.500,2.500 L9,6Z M4,11 L6.500,14.500 L9,11Z" fill="#222"/></svg>
</body>
</html>
